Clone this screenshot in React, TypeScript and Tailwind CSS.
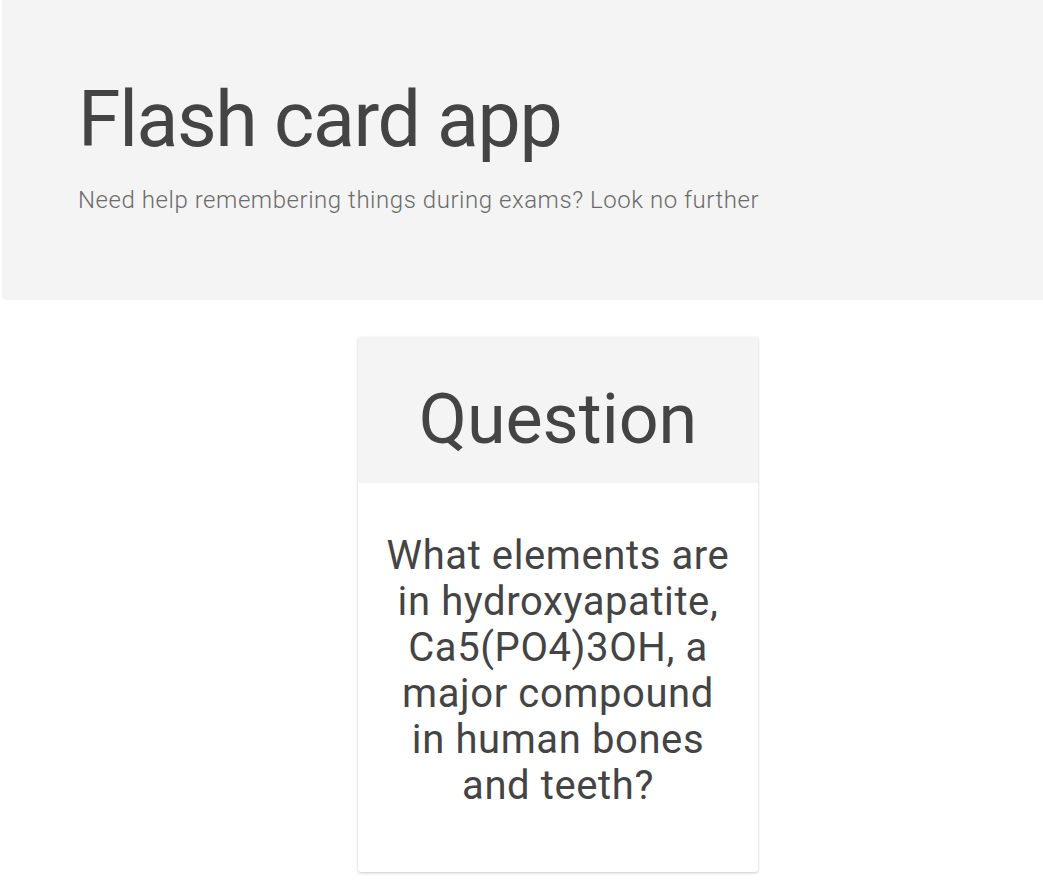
export default function App() {
  return (
    <div className="min-h-screen bg-white text-[#444] font-['Roboto',sans-serif]">
      {/* Jumbotron */}
      <header className="ml-[2px] h-[300px] bg-[#f4f4f4] rounded-bl-[4px] px-[76px] pt-[82px]">
        <h1 className="text-[77px] leading-none font-normal tracking-[-1.4px]">Flash card app</h1>
        <p className="mt-[29px] text-[24px] leading-none font-light tracking-[0.55px] text-[#6b6b6b]">
          Need help remembering things during exams? Look no further
        </p>
      </header>

      {/* Card */}
      <main className="flex justify-center pl-[73px] pt-[37px]">
        <div className="w-[400px] h-[535px] bg-white rounded-[3px] shadow-[0_1px_3px_rgba(0,0,0,0.22)] overflow-hidden text-center">
          <div className="bg-[#f4f4f4] pt-[47px] pb-[29px]">
            <h2 className="text-[70px] leading-none font-normal">Question</h2>
          </div>
          <p className="px-[26px] pt-[50px] text-[40px] leading-[46px] tracking-[0.6px]">
            What elements are in hydroxyapatite, Ca5(PO4)3OH, a major compound in human bones and teeth?
          </p>
        </div>
      </main>
    </div>
  )
}
